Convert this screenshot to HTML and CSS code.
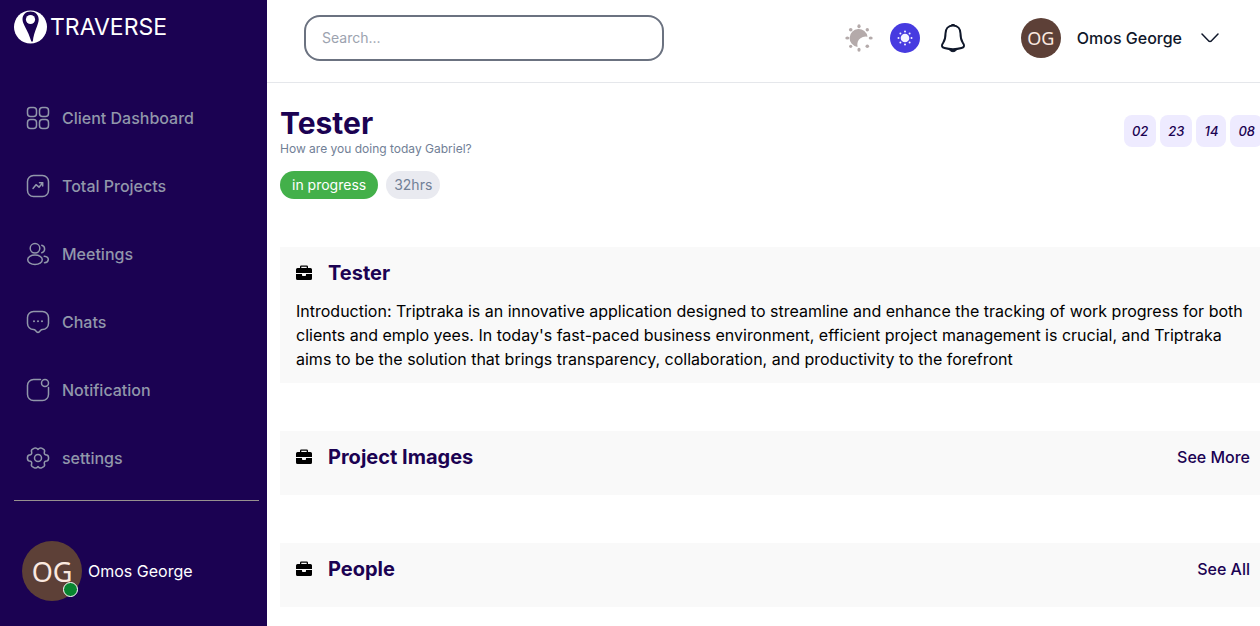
FILE: index.html
```html
<!DOCTYPE html>
<html lang="en">
<head>
<meta charset="utf-8">
<meta name="viewport" content="width=device-width, initial-scale=1">
<title>Traverse</title>
<link rel="stylesheet" href="styles.css">
</head>
<body>
<svg class="sprite" aria-hidden="true">
  <symbol id="briefcase" viewBox="0 0 16 16">
    <path fill-rule="evenodd" d="M4 3V1.800Q4 .5 5.300.5H10.700Q12 .5 12 1.800V3H14.500Q16 3 16 4.500V8H0V4.500Q0 3 1.500 3ZM5.300 3H10.700V1.800H5.300Z"/>
    <path d="M0 9H6V10.200Q6 11 6.800 11H9.200Q10 11 10 10.200V9H16V13.500Q16 15 14.500 15H1.500Q0 15 0 13.500Z"/>
  </symbol>
</svg>
<div class="app">
  <aside class="sidebar">
    <a class="brand" href="#">
      <svg class="brand-mark" viewBox="0 0 34 34" aria-hidden="true">
        <circle cx="16.500" cy="17" r="16.500" fill="#fff"/>
        <path fill="#1b0252" d="M16.500 1.500C11.500 1.500 8.500 5 8.500 9.500C8.500 14 14 20 17.300 31.500L18.800 31.500C20 21 24.700 14.500 24.700 9.500C24.700 5 21.500 1.500 16.500 1.500Z"/>
        <circle cx="16.500" cy="9.500" r="4.600" fill="#fff"/>
      </svg>
      <span>TRAVERSE</span>
    </a>
    <nav class="nav">
      <a class="nav-item" href="#">
        <svg class="nav-icon" viewBox="0 0 24 24" aria-hidden="true"><rect x="1.500" y="1.500" width="9" height="9" rx="3"/><rect x="13.500" y="1.500" width="9" height="9" rx="3"/><rect x="1.500" y="13.500" width="9" height="9" rx="3"/><rect x="13.500" y="13.500" width="9" height="9" rx="3"/></svg>
        <span>Client Dashboard</span>
      </a>
      <a class="nav-item" href="#">
        <svg class="nav-icon" viewBox="0 0 24 24" aria-hidden="true"><rect x="1.500" y="1.500" width="21" height="21" rx="6"/><path d="M7 14.500l3-3.800 3 2.500 3.700-4.500M13.500 8.700h3.200v3.200"/></svg>
        <span>Total Projects</span>
      </a>
      <a class="nav-item" href="#">
        <svg class="nav-icon" viewBox="0 0 24 24" aria-hidden="true"><circle cx="9" cy="6.300" r="4.800"/><ellipse cx="9" cy="17.800" rx="7.300" ry="4.700"/><path d="M15.800 3.200a3.900 3.900 0 0 1 0 7.500M18.200 14.200c6 .8 4.800 6.200.3 6.500"/></svg>
        <span>Meetings</span>
      </a>
      <a class="nav-item" href="#">
        <svg class="nav-icon" viewBox="0 0 24 24" aria-hidden="true"><path d="M7.500 1.500h9a6 6 0 0 1 6 6v6a6 6 0 0 1-6 6q-1.200 0-2 .9l-1.300 1.500q-1.200 1.200-2.400 0l-1.300-1.500q-.8-.9-2-.9a6 6 0 0 1-6-6v-6a6 6 0 0 1 6-6Z"/><path class="dots" d="M8 11.200v.1M12 11.200v.1M16 11.200v.1"/></svg>
        <span>Chats</span>
      </a>
      <a class="nav-item" href="#">
        <svg class="nav-icon" viewBox="0 0 24 24" aria-hidden="true"><path d="M14.500 1.500h-7a6 6 0 0 0-6 6v9a6 6 0 0 0 6 6h9a6 6 0 0 0 6-6v-7"/><circle cx="19" cy="5" r="3.500"/></svg>
        <span>Notification</span>
      </a>
      <a class="nav-item" href="#">
        <svg class="nav-icon" viewBox="0 0 24 24" aria-hidden="true"><circle cx="12" cy="12" r="3.500"/><path d="M12 3.500Q13.700 1.200 15.600 2.200L17.700 3.400Q19.200 4.400 18.300 6.400Q18 8.800 20.600 9Q22.600 9.200 22.600 12Q22.600 14.800 20.600 15Q18 15.200 18.300 17.600Q19.200 19.600 17.700 20.600L15.600 21.800Q13.700 22.800 12 20.500Q10.300 22.800 8.400 21.800L6.300 20.600Q4.800 19.600 5.700 17.600Q6 15.200 3.400 15Q1.400 14.800 1.400 12Q1.400 9.200 3.400 9Q6 8.800 5.700 6.400Q4.800 4.400 6.300 3.400L8.400 2.200Q10.300 1.200 12 3.500Z"/></svg>
        <span>settings</span>
      </a>
    </nav>
    <hr class="divider">
    <div class="account">
      <span class="avatar avatar-large">OG<i class="online"></i></span>
      <span>Omos George</span>
    </div>
  </aside>

  <div class="page">
    <header class="topbar">
      <input class="search" type="search" placeholder="Search..." aria-label="Search">
      <div class="actions">
        <button class="icon-button" aria-label="Dark theme">
          <svg class="moon" viewBox="0 0 28 28" aria-hidden="true">
            <path d="M22.500 12.800A9 9 0 1 0 12.500 22.900Q11.500 17 15.500 14.300Q18.500 12 22.500 12.800Z"/>
            <ellipse cx="14" cy="2.300" rx="1.600" ry="2"/><ellipse cx="14" cy="25.700" rx="1.600" ry="2"/><ellipse cx="2.300" cy="14" rx="2" ry="1.600"/><ellipse cx="25.700" cy="14" rx="2" ry="1.600"/><circle cx="5.700" cy="5.700" r="1.800"/><circle cx="22.300" cy="5.700" r="1.700"/><circle cx="5.700" cy="22.300" r="1.600"/><circle cx="22.300" cy="22.300" r="1.800"/>
          </svg>
        </button>
        <button class="icon-button sun-button" aria-label="Light theme">
          <svg class="sun" viewBox="0 0 16 16" aria-hidden="true"><circle cx="8" cy="8" r="4.300"/><circle cx="8" cy="1.500" r="1"/><circle cx="8" cy="14.500" r="1"/><circle cx="1.500" cy="8" r="1"/><circle cx="14.500" cy="8" r="1"/><circle cx="3.400" cy="3.400" r="1"/><circle cx="12.600" cy="3.400" r="1"/><circle cx="3.400" cy="12.600" r="1"/><circle cx="12.600" cy="12.600" r="1"/></svg>
        </button>
        <button class="icon-button bell-button" aria-label="Notifications">
          <svg class="bell" viewBox="0 0 26 30" aria-hidden="true"><path d="M13 2.500C8 2.500 5.500 6 5.500 10.500C5.500 17 4.700 17.500 2.700 20.500C1 23.200 2.200 24.400 4.500 25Q13 27.300 21.500 25C23.800 24.400 25 23.200 23.300 20.500C21.300 17.500 20.500 17 20.500 10.500C20.500 6 18 2.500 13 2.500Z"/><path class="clapper" d="M9 26.500Q13 31 17 26.500Z"/><path class="clapper" d="M10.500 2.500Q13 0 15.500 2.500Z"/></svg>
        </button>
      </div>
      <button class="profile">
        <span class="avatar">OG</span>
        <span>Omos George</span>
        <svg class="chevron" viewBox="0 0 18 10" aria-hidden="true"><path d="M1 1l6.500 6.800q1.500 1.200 3 0L17 1"/></svg>
      </button>
    </header>

    <main class="content">
      <div class="intro">
        <div>
          <h1>Tester</h1>
          <p class="greeting">How are you doing today Gabriel?</p>
          <div class="badges"><span class="badge badge-progress">in progress</span><span class="badge">32hrs</span></div>
        </div>
        <div class="timer"><span>02</span><span>23</span><span>14</span><span>08</span></div>
      </div>
      <section class="card">
        <div class="card-head"><svg class="card-icon" aria-hidden="true"><use href="#briefcase"/></svg><h2>Tester</h2></div>
        <p>Introduction: Triptraka is an innovative application designed to streamline and enhance the tracking of work progress for both clients and emplo yees. In today's fast-paced business environment, efficient project management is crucial, and Triptraka aims to be the solution that brings transparency, collaboration, and productivity to the forefront</p>
      </section>
      <section class="card">
        <div class="card-head"><svg class="card-icon" aria-hidden="true"><use href="#briefcase"/></svg><h2>Project Images</h2><a href="#">See More</a></div>
      </section>
      <section class="card">
        <div class="card-head"><svg class="card-icon" aria-hidden="true"><use href="#briefcase"/></svg><h2>People</h2><a href="#">See All</a></div>
      </section>
    </main>
  </div>
</div>
</body>
</html>
```

FILE: styles.css
```css
* { box-sizing: border-box; }
body, h1, h2, p { margin: 0; }
body {
  font: 16px/24px Inter, "Liberation Sans", sans-serif;
  color: #000;
  background: #fff;
}
a { color: inherit; text-decoration: none; }
button { font: inherit; border: 0; padding: 0; background: none; cursor: pointer; }
.sprite { display: none; }

.app { display: flex; min-height: 100vh; }

.sidebar {
  flex: 0 0 267px;
  padding: 10px 8px 0 14px;
  background: #1b0252;
  color: #fff;
}
.brand {
  display: flex;
  align-items: center;
  gap: 2px;
  font-size: 23px;
  line-height: 34px;
}
.brand-mark { width: 34px; height: 34px; }
.nav { padding-top: 40px; }
.nav-item {
  display: flex;
  align-items: center;
  gap: 12px;
  height: 68px;
  padding-left: 12px;
  color: #9197aa;
  font-weight: 500;
}
.nav-icon {
  width: 24px;
  height: 24px;
  fill: none;
  stroke: currentColor;
  stroke-width: 1.5;
  stroke-linecap: round;
  stroke-linejoin: round;
}
.dots { stroke-width: 2; }
.divider { margin: 8px 0 0; border: 0; border-top: 1px solid #97918f; }
.account {
  display: flex;
  align-items: center;
  gap: 6px;
  padding: 40px 8px 24px;
}
.avatar {
  position: relative;
  display: flex;
  align-items: center;
  justify-content: center;
  width: 40px;
  height: 40px;
  border-radius: 50%;
  background: #5d4037;
  color: #fbe9e0;
  font: 18px/1 "Noto Sans", "Open Sans", sans-serif;
}
.avatar-large { width: 60px; height: 60px; font-size: 27px; }
.online {
  position: absolute;
  right: 4px;
  bottom: 4px;
  width: 15px;
  height: 15px;
  border: 1px solid #fff;
  border-radius: 50%;
  background: #07842f;
}

.page { flex: 1; min-width: 0; overflow-x: hidden; }
.topbar {
  display: flex;
  align-items: center;
  height: 83px;
  padding: 0 41px 7px 37px;
  border-bottom: 1px solid #e5e7eb;
}
.search {
  width: 360px;
  height: 46px;
  padding: 0 16px;
  border: 2px solid #6b7280;
  border-radius: 16px;
  background: #fff;
  font: 14px/20px Inter, "Liberation Sans", sans-serif;
  color: #111827;
}
.search::placeholder { color: #9ca3af; opacity: 1; }
.actions { display: flex; align-items: center; gap: 17px; margin-left: auto; }
.icon-button { display: flex; align-items: center; justify-content: center; }
.moon { width: 28px; height: 28px; fill: #b4aaaa; }
.sun-button { width: 30px; height: 30px; border-radius: 50%; background: #473be0; }
.sun { width: 16px; height: 16px; fill: #f3f2ff; }
.bell-button { margin-left: 3px; }
.bell { width: 26px; height: 30px; fill: none; stroke: #0f172a; stroke-width: 2; stroke-linejoin: round; }
.bell .clapper { fill: #0f172a; stroke-width: 1; }
.profile {
  display: flex;
  align-items: center;
  gap: 16px;
  margin-left: 55px;
  color: #0f172a;
  font-weight: 500;
}
.chevron { width: 18px; height: 10px; margin-left: 3px; fill: none; stroke: #0f172a; stroke-width: 1.5; stroke-linecap: round; }

.content {
  display: flex;
  flex-direction: column;
  gap: 48px;
  padding: 22px 0 19px 13px;
}
.intro { display: flex; justify-content: space-between; align-items: flex-start; }
h1 { font-size: 30px; line-height: 36px; font-weight: 700; color: #1b0252; }
.greeting { font-size: 12px; line-height: 16px; color: #718096; }
.badges { display: flex; gap: 8px; margin-top: 14px; }
.badge {
  padding: 4px 8px;
  border-radius: 14px;
  background: #e9eaf0;
  color: #718096;
  font-size: 14px;
  line-height: 20px;
}
.badge-progress { padding: 4px 12px; background: #43b04a; color: #fff; }
.timer { display: flex; gap: 4px; margin: 10px -3px 0 0; }
.timer span {
  padding: 4px 8px;
  border-radius: 8px;
  background: #eeebff;
  color: #1b0252;
  font-size: 13px;
  font-style: italic;
  font-weight: 500;
}
.card { padding: 12px 10px 12px 16px; background: #f9f9f9; }
.card-head { display: flex; align-items: center; gap: 16px; margin-bottom: 12px; }
.card-icon { width: 16px; height: 16px; }
.card-head h2 { font-size: 20px; line-height: 28px; font-weight: 700; color: #1b0252; }
.card-head a { margin-left: auto; color: #1b0252; font-weight: 500; }
```
